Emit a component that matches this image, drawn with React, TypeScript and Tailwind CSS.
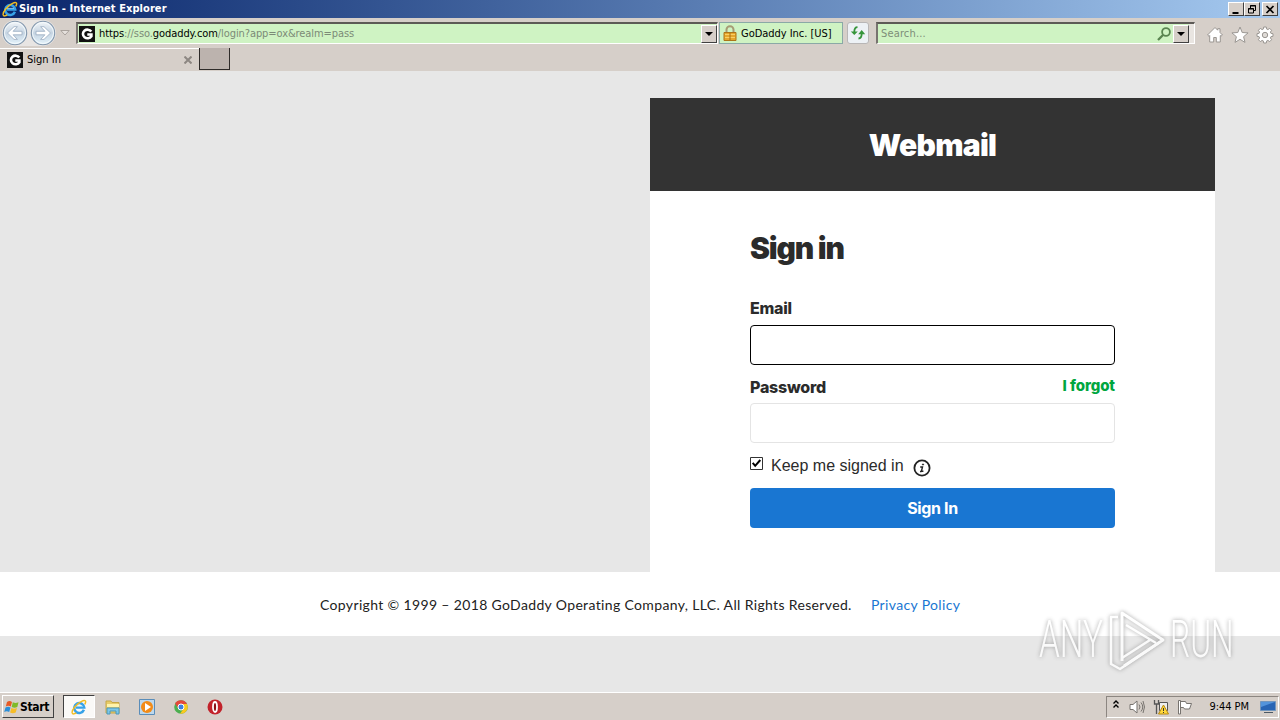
import type { ReactNode } from "react";

const winFont = "font-['DejaVu_Sans_Condensed','DejaVu_Sans',sans-serif]";
const raised =
  "border border-t-white border-l-white border-r-[#404040] border-b-[#404040] bg-[#d6cfc9]";

function IeLogo({ className }: { className: string }) {
  return (
    <svg viewBox="0 0 16 16" className={className} fill="none">
      <path d="M12.900 10.800A5 5 0 1 1 13.200 8.400H5" stroke="#37a2e8" strokeWidth="2.500" />
      <path d="M5 7.300h7" stroke="#b5e4fc" strokeWidth="0.700" />
      <path
        d="M13.800 5.400C15.800 1.600 14 .500 10.500 2.400 5.400 5 .600 11 1.200 13.900c.4 1.600 2.400 1 4.100 0"
        stroke="#f2bd22"
        strokeWidth="1.500"
      />
    </svg>
  );
}

function SiteIcon() {
  return (
    <svg viewBox="0 0 16 16" className="size-4 shrink-0">
      <path fill="#111" d="M0 0h16v16H0z" />
      <path d="M12.300 5.500A4.600 4.300 0 1 0 12.400 10.300V8.500H8.300" fill="none" stroke="#fff" strokeWidth="2.600" />
    </svg>
  );
}

function NavArrow({ flip = false }: { flip?: boolean }) {
  return (
    <svg viewBox="0 0 26 26" className={flip ? "size-[26px] -scale-x-100" : "size-[26px]"}>
      <defs>
        <linearGradient id="orb" x1="0" y1="0" x2="0" y2="1">
          <stop offset="0" stopColor="#f3f6f9" />
          <stop offset="0.5" stopColor="#c5d4e2" />
          <stop offset="1" stopColor="#e4f3fb" />
        </linearGradient>
      </defs>
      <circle cx="13" cy="13" r="11.700" fill="url(#orb)" stroke="#8297ad" strokeWidth="1.100" />
      <circle cx="13" cy="13" r="10.500" fill="none" stroke="#f5fafd" strokeWidth="0.900" />
      <path
        d="M5.500 13 12 6.700h3.400l-4.300 4.600H20v3.500h-8.900l4.300 4.600H12z"
        fill="#fff"
        stroke="#98abc0"
        strokeWidth="0.800"
      />
    </svg>
  );
}

function DropButton() {
  return (
    <span className={`flex h-[18px] w-4 items-center justify-center ${raised}`}>
      <svg viewBox="0 0 8 4" className="h-1 w-2">
        <path d="M0 0h8L4 4z" />
      </svg>
    </span>
  );
}

function WindowButton({ children }: { children: ReactNode }) {
  return (
    <span className={`flex h-[14px] w-4 items-center justify-center ${raised}`}>
      <svg viewBox="0 0 12 11" className="h-[11px] w-3 shrink-0" fill="none" stroke="#000">
        {children}
      </svg>
    </span>
  );
}

function TitleBar() {
  return (
    <div className="flex h-[18px] items-center bg-linear-to-r from-[#0a246a] to-[#a6caf0] pr-0.5 pl-0.5">
      <IeLogo className="size-4" />
      <span className="ml-px text-[11px] leading-4 font-bold tracking-[0.07px] text-white">
        Sign In - Internet Explorer
      </span>
      <div className="ml-auto flex">
        <WindowButton>
          <path d="M2.500 9h6" strokeWidth="2" />
        </WindowButton>
        <WindowButton>
          <path d="M4.500 4V1.500h5v5H8M4 2h6" />
          <path d="M2.500 4.500h5v4.500h-5zM2 5h6" />
        </WindowButton>
        <span className="w-0.5" />
        <WindowButton>
          <path d="m2.500 2 7 7m0-7-7 7" strokeWidth="1.700" />
        </WindowButton>
      </div>
    </div>
  );
}

function NavBar() {
  return (
    <div className="flex h-[30px] items-center bg-[#d6cfc9] pl-[2px] text-[11px]">
      <div className="flex gap-0.5 rounded-full bg-[#e8e5e3]">
        <NavArrow />
        <NavArrow flip />
      </div>
      <svg viewBox="0 0 10 6" className="ml-1 h-1.5 w-2.5" fill="#e6e1dd" stroke="#aaa39d">
        <path d="M.800.500h8.400L5 5z" />
      </svg>

      <div className="ml-[6px] flex h-[22px] w-[642px] items-center border-t-2 border-r border-b border-l-2 border-t-[#5d5a56] border-r-white border-b-white border-l-[#77736f] bg-[#cff3c3] pl-px">
        <SiteIcon />
        <span className="mt-0.5 ml-1 tracking-[-0.08px] whitespace-nowrap text-[#7c8a77]">
          <span className="text-black">https</span>://sso.<span className="text-black">godaddy.com</span>
          /login?app=ox&amp;realm=pass
        </span>
        <span className="ml-auto">
          <DropButton />
        </span>
      </div>

      <div className="ml-px flex h-[22px] w-[124px] items-center border border-[#8aa9a6] bg-[#cff3c3] pl-[3px]">
        <svg viewBox="0 0 14 16" className="h-4 w-3.5">
          <path d="M3.500 8V4.500a3.500 3.300 0 0 1 7 0V8" fill="none" stroke="#a69b74" strokeWidth="2" />
          <path fill="#e5a72b" stroke="#ad7518" d="M1 7.500h12V15.500H1z" />
          <path stroke="#f9cf65" d="M2 9.500h10M2 12.500h10" />
          <path stroke="#a56c13" d="M7 8v7" />
        </svg>
        <span className="mt-0.5 ml-1 tracking-[-0.03px] whitespace-nowrap">GoDaddy Inc. [US]</span>
      </div>

      <div className="ml-1 flex h-[22px] w-[22px] items-center justify-center rounded-[3px] border border-[#b8b6b6] bg-[#edf1f5]">
        <svg viewBox="0 0 16 14" className="h-3.5 w-4 shrink-0" fill="none" stroke="#36953b" strokeWidth="1.800">
          <path d="M7.500 1.200C5 1.200 4.300 3 4.300 6M8.500 12.500c2.500 0 3.200-1.500 3.200-5" />
          <path fill="#36953b" stroke="none" d="M.800 5.500h7L4.300 9zM8.200 8.300h7L11.700 4z" />
        </svg>
      </div>

      <div className="ml-[7px] flex h-[22px] w-[319px] items-center border-t-2 border-r border-b border-l-2 border-t-[#5d5a56] border-r-white border-b-white border-l-[#77736f] bg-[#cff3c3] pl-[3px]">
        <span className="mt-0.5 tracking-[0.150px] text-[#7d8d78]">Search...</span>
        <svg viewBox="0 0 15 14" className="mr-px ml-auto h-3.5 w-[15px]" fill="none" stroke="#598450" strokeWidth="1.800">
          <circle cx="9" cy="5" r="3.900" />
          <path d="M6 8 1 13" strokeWidth="2.300" />
        </svg>
        <DropButton />
        <span className="h-full w-[5px] bg-[#e9e5e1]" />
      </div>

      <div className="mt-1 ml-[11px] flex items-center gap-[7px]">
        <svg viewBox="0 0 18 18" className="size-[18px]" fill="#fff" stroke="#9a9692">
          <path d="M9 1.500 1.500 9l1.500 1.200.700-.700v6.500h4v-4.500h2.600V16h4V9.500l.700.700L16.500 9 14 6.500V2.700h-2.300v1.500z" />
        </svg>
        <svg viewBox="0 0 18 18" className="size-[18px]" fill="#fff" stroke="#9a9692">
          <path d="m9 1 2.200 5.500 5.900.4-4.500 3.800 1.400 5.700-5-3.100-5 3.100 1.400-5.700L.900 6.900l5.900-.4z" />
        </svg>
        <svg viewBox="0 0 18 18" className="size-[18px]" fill="#fff" stroke="#9a9692">
          <path d="m7.700 1h2.600l.4 2.100 1.200.5 1.800-1.200 1.900 1.900-1.200 1.800.5 1.200 2.100.4v2.600l-2.100.4-.5 1.200 1.200 1.800-1.900 1.900-1.800-1.200-1.200.5-.4 2.100H7.700l-.4-2.100-1.200-.5-1.800 1.200-1.900-1.900 1.200-1.800-.5-1.200L1 10.300V7.700l2.100-.4.500-1.200-1.200-1.800 1.900-1.900 1.800 1.200 1.200-.5z" />
          <circle cx="9" cy="9" r="2.700" fill="#dedad6" />
        </svg>
      </div>
    </div>
  );
}

function TabBar() {
  return (
    <div className="flex h-[23px] bg-[#d6cfc9] text-[11px]">
      <div className="flex w-[199px] items-center border-t border-white pr-[7px] pl-[7px]">
        <SiteIcon />
        <span className="mt-px ml-1">Sign In</span>
        <svg viewBox="0 0 8 8" className="ml-auto size-2" stroke="#8d8782" strokeWidth="2">
          <path d="m.500.500 7 7m0-7-7 7" />
        </svg>
      </div>
      <div className="h-[22px] w-[31px] border-r border-b border-l border-[#2e2b29] bg-[#bcb3ae]" />
    </div>
  );
}

function SignInCard() {
  return (
    <div className="ml-[650px] h-[474px] w-[565px] bg-white font-['Inter','Lato',sans-serif] text-[#2b2b2b]">
      <div className="flex h-[93px] items-center justify-center bg-[#333] pt-px">
        <h1 className="text-[30px] leading-9 font-black tracking-[-0.7px] text-white">Webmail</h1>
      </div>
      <form className="px-[100px] pt-[39px]">
        <h2 className="text-[30px] leading-9 font-black tracking-[-1.2px]">Sign in</h2>
        <label className="mt-8 block text-base leading-5 font-extrabold tracking-[-0.25px]">Email</label>
        <div className="mt-[7px] h-10 rounded-[4px] border border-black" />
        <div className="mt-[11px] flex h-[27px] justify-between leading-5 font-extrabold">
          <label className="-mt-px text-base tracking-[-0.25px]">Password</label>
          <a className="text-[15px] tracking-[-0.1px] text-[#00a63f]">I forgot</a>
        </div>
        <div className="h-10 rounded-[4px] border border-[#e4e4e4]" />
        <div className="mt-3 flex h-6 items-start">
          <svg viewBox="0 0 13 13" className="mt-0.5 size-[13px]">
            <path d="M.500.500h12v12H.500z" fill="#fff" stroke="#333" />
            <path d="m2.700 5.800 2.500 3L10.300 3" fill="none" stroke="#000" strokeWidth="2" />
          </svg>
          <span className="ml-2 font-['Liberation_Sans',Arial,sans-serif] text-base leading-[22px]">
            Keep me signed in
          </span>
          <svg viewBox="0 0 18 18" className="mt-1 ml-[9px] size-[18px]" fill="none" stroke="#222">
            <circle cx="9" cy="9" r="7.600" strokeWidth="1.800" />
            <path d="M7.200 8h2.300l-1.100 4.300h2M7 12.500h1.500" strokeWidth="1.400" />
            <circle cx="10" cy="5.500" r="0.600" fill="#222" />
          </svg>
        </div>
        <button
          type="button"
          className="mt-[9px] flex h-10 w-full items-center justify-center rounded-[4px] bg-[#1976d2] text-base font-bold tracking-[-0.35px] text-white"
        >
          Sign In
        </button>
      </form>
    </div>
  );
}

function Watermark() {
  return (
    <div className="absolute top-[608px] left-[1039px] flex h-16 w-[196px] items-center opacity-80 drop-shadow-[0_0_2px_#888]">
      <span className="w-[69px] origin-left scale-x-[.64] font-['Roboto',sans-serif] text-[52px] leading-[64px] font-light text-white">
        ANY
      </span>
      <svg viewBox="0 0 58 64" className="h-16 w-[58px] shrink-0" fill="none" stroke="#fff" strokeWidth="3" strokeLinejoin="round">
        <path d="M14 53V5l41 27-39 26" />
        <path d="M10 9H3v47l9 5 40-27M18 17l30 18M14 50l28-18" strokeWidth="2.500" />
      </svg>
      <span className="ml-1 w-[64px] origin-left scale-x-[.61] font-['Roboto',sans-serif] text-[52px] leading-[64px] font-light text-white">
        RUN
      </span>
    </div>
  );
}

function Taskbar() {
  return (
    <div className="flex h-7 items-center border-t border-white bg-[#d6cfc9] pr-px pl-0.5">
      <div className={`flex h-[23px] w-[52px] items-center pl-px ${raised}`}>
        <svg viewBox="0 0 16 16" className="size-4">
          <path fill="#e75a24" d="M3 3c2-1.500 3.500-1 5 0L6.800 7.500c-2-1-3.300-1-5 0z" />
          <path fill="#7fba28" d="M8.800 3.300c2 1 3.500 1 5.700 0L13.300 8c-2 1-3.500 1-5.600 0z" />
          <path fill="#2a8ed8" d="M1.500 8.500c2-1 3.300-1 5 0L5.200 13c-1.800-1-3.200-1-5 0z" />
          <path fill="#f6bd28" d="M7.400 9c2 1 3.500 1 5.600 0l-1.300 4.500c-2 1-3.500 1-5.600 0z" />
        </svg>
        <span className="text-xs leading-4 font-bold tracking-[-0.35px]">Start</span>
      </div>
      <div className="ml-[9px] flex h-[23px] w-8 items-center justify-center border border-t-[#404040] border-r-white border-b-white border-l-[#404040] bg-[#faf9f7]">
        <IeLogo className="size-4" />
      </div>
      <svg viewBox="0 0 16 16" className="ml-[10px] size-4">
        <path fill="#e8cc69" stroke="#c6a747" d="M1 2h5l1 1.500h7V14H1z" />
        <path fill="#fff3ab" d="M2 5h12v3H2z" />
        <path fill="#7bc6e8" stroke="#4b98bb" d="M2 9h12v6h-3v-3H5v3H2z" />
      </svg>
      <svg viewBox="0 0 16 16" className="ml-[18px] size-4">
        <path fill="#bdd8ed" stroke="#5a8db9" d="M.500.500h15v15H.500z" />
        <circle cx="8" cy="8" r="6" fill="#f28b18" />
        <path fill="#fff" d="m6 4 6 4-6 4z" />
      </svg>
      <svg viewBox="0 0 16 16" className="ml-[18px] size-4">
        <circle cx="8" cy="8" r="6.800" fill="#4caf50" />
        <path fill="#e4483b" d="M2.100 4.600A6.800 6.800 0 0 1 14 5H8l-2.600 4.500z" />
        <path fill="#fbc91e" d="M14 5a6.800 6.800 0 0 1-7 9.700l3.700-5.200L9.500 5z" />
        <circle cx="8" cy="8" r="3" fill="#3c80e1" stroke="#fff" />
      </svg>
      <svg viewBox="0 0 16 16" className="ml-[18px] size-4">
        <circle cx="8" cy="8" r="7.500" fill="#c2222a" />
        <ellipse cx="8" cy="8" rx="2" ry="5" fill="#8b1015" stroke="#fff" strokeWidth="1.800" />
      </svg>

      <div className="ml-auto flex h-[22px] w-[173px] items-center border border-t-[#8c8681] border-r-white border-b-white border-l-[#8c8681] pr-0.5 pl-1.5">
        <svg viewBox="0 0 6 9" className="mb-1 h-[9px] w-1.5" fill="none" stroke="#000" strokeWidth="1.400">
          <path d="m.500 3.500L3 1l2.500 2.500M.500 7.500 3 5l2.500 2.500" />
        </svg>
        <svg viewBox="0 0 16 16" className="ml-[10px] size-4" fill="none" stroke="#77736f">
          <path fill="#fff" d="M1 5.500h3L8 2v12l-4-3.500H1z" />
          <path d="M10 5.500q2 2.500 0 5M12 3.500q3.500 4.500 0 9M14 2q3 6 0 12" />
        </svg>
        <svg viewBox="0 0 16 16" className="ml-2 size-4">
          <path fill="#eee" stroke="#555" d="M6.500 3.500h8v8h-8z" />
          <path fill="none" stroke="#555" strokeWidth="1.300" d="M1.500 1v4h4V1M3.500 5v10" />
          <path fill="#ffd83b" stroke="#b7880e" d="m10.500 6 5 9h-10z" />
          <path stroke="#333" d="M10.500 9v3M10.500 13v1" />
        </svg>
        <svg viewBox="0 0 16 16" className="ml-2 size-4" fill="#fff" stroke="#77736f">
          <path d="M1.500 1.500h2V15h-2zM3.500 2.500h5l1 2h5L12.500 10h-5l-1-1.500h-3z" />
        </svg>
        <span className="mt-px ml-auto text-[11px] tracking-[-0.050px] whitespace-nowrap">9:44 PM</span>
        <svg viewBox="0 0 16 14" className="ml-[11px] h-3.5 w-4">
          <path fill="#2865b4" stroke="#7296bd" d="M.500 1.500h15v9H.500z" />
          <path fill="#5394db" d="M1 2h14L1 7z" />
          <path stroke="#4c5965" d="M4 12.500h9" />
        </svg>
      </div>
    </div>
  );
}

export default function App() {
  return (
    <div className={`relative flex h-[720px] w-[1280px] flex-col overflow-hidden bg-[#e7e7e7] text-black ${winFont}`}>
      <TitleBar />
      <NavBar />
      <TabBar />
      <main className="flex-1 pt-[27px]">
        <SignInCard />
        <footer className="flex h-16 items-center bg-white pl-[320px] font-['Lato',sans-serif] text-[14px] whitespace-nowrap text-[#222]">
          <span className="w-[551px] tracking-[0.35px]">
            Copyright © 1999 – 2018 GoDaddy Operating Company, LLC. All Rights Reserved.
          </span>
          <a className="tracking-[0.35px] text-[#1976d2]">Privacy Policy</a>
        </footer>
      </main>
      <Taskbar />
      <Watermark />
    </div>
  );
}
